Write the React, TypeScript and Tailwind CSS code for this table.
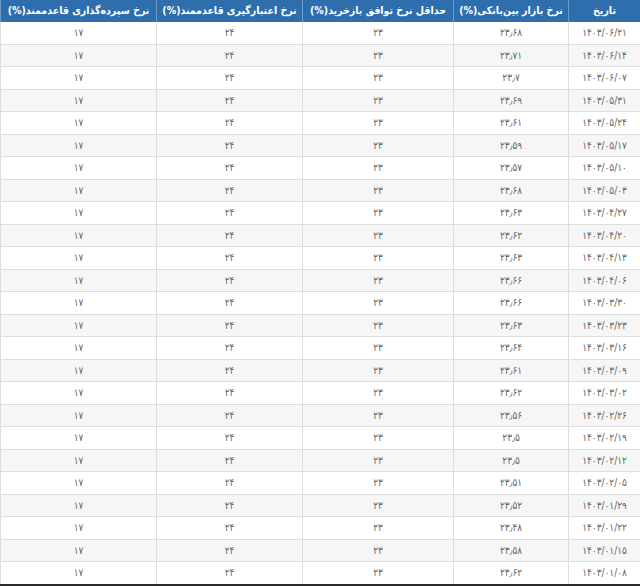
const headers = [
  "تاریخ",
  "نرخ بازار بین‌بانکی(%)",
  "حداقل نرخ توافق بازخرید(%)",
  "نرخ اعتبارگیری قاعدممند(%)",
  "نرخ سپرده‌گذاری قاعدممند(%)",
];

const rows: [string, string][] = [
  ["۱۴۰۳/۰۶/۲۱", "۲۳٫۶۸"],
  ["۱۴۰۳/۰۶/۱۴", "۲۳٫۷۱"],
  ["۱۴۰۳/۰۶/۰۷", "۲۳٫۷"],
  ["۱۴۰۳/۰۵/۳۱", "۲۳٫۶۹"],
  ["۱۴۰۳/۰۵/۲۴", "۲۳٫۶۱"],
  ["۱۴۰۳/۰۵/۱۷", "۲۳٫۵۹"],
  ["۱۴۰۳/۰۵/۱۰", "۲۳٫۵۷"],
  ["۱۴۰۳/۰۵/۰۳", "۲۳٫۶۸"],
  ["۱۴۰۳/۰۴/۲۷", "۲۳٫۶۳"],
  ["۱۴۰۳/۰۴/۲۰", "۲۳٫۶۲"],
  ["۱۴۰۳/۰۴/۱۳", "۲۳٫۶۳"],
  ["۱۴۰۳/۰۴/۰۶", "۲۳٫۶۶"],
  ["۱۴۰۳/۰۳/۳۰", "۲۳٫۶۶"],
  ["۱۴۰۳/۰۳/۲۳", "۲۳٫۶۳"],
  ["۱۴۰۳/۰۳/۱۶", "۲۳٫۶۴"],
  ["۱۴۰۳/۰۳/۰۹", "۲۳٫۶۱"],
  ["۱۴۰۳/۰۳/۰۲", "۲۳٫۶۲"],
  ["۱۴۰۳/۰۲/۲۶", "۲۳٫۵۶"],
  ["۱۴۰۳/۰۲/۱۹", "۲۳٫۵"],
  ["۱۴۰۳/۰۲/۱۲", "۲۳٫۵"],
  ["۱۴۰۳/۰۲/۰۵", "۲۳٫۵۱"],
  ["۱۴۰۳/۰۱/۲۹", "۲۳٫۵۲"],
  ["۱۴۰۳/۰۱/۲۲", "۲۳٫۴۸"],
  ["۱۴۰۳/۰۱/۱۵", "۲۳٫۵۸"],
  ["۱۴۰۳/۰۱/۰۸", "۲۳٫۶۲"],
];

const cols = "grid grid-cols-[72px_115px_151px_146px_156px]";

export default function App() {
  return (
    <div
      dir="rtl"
      className="w-[640px] h-[586px] overflow-hidden bg-white flex flex-col"
      style={{ fontFamily: '"DejaVu Sans Condensed", "DejaVu Sans", sans-serif' }}
    >
      <div className={`${cols} h-[22px] shrink-0 bg-[#2f6ead]`}>
        {headers.map((h, i) => (
          <div
            key={i}
            className="flex items-center justify-center border-l border-[#6f9bc9] text-white text-[10.5px] font-bold font-stretch-condensed whitespace-nowrap overflow-hidden"
          >
            {h}
          </div>
        ))}
      </div>

      <div className="flex-1 overflow-hidden">
        {rows.map(([date, rate], i) => (
          <div
            key={date}
            className={`${cols} h-[22.5px] ${i % 2 === 1 ? "bg-[#f6f6f6]" : "bg-white"} text-[#666] text-[10px] font-stretch-condensed`}
          >
            {[date, rate, "۲۳", "۲۴", "۱۷"].map((v, j) => (
              <div
                key={j}
                className="flex items-center justify-center border-l border-b border-[#dddddd]"
              >
                {v}
              </div>
            ))}
          </div>
        ))}
      </div>
      <div className="h-[2px] shrink-0 bg-[#2a2a2a]" />
    </div>
  );
}
